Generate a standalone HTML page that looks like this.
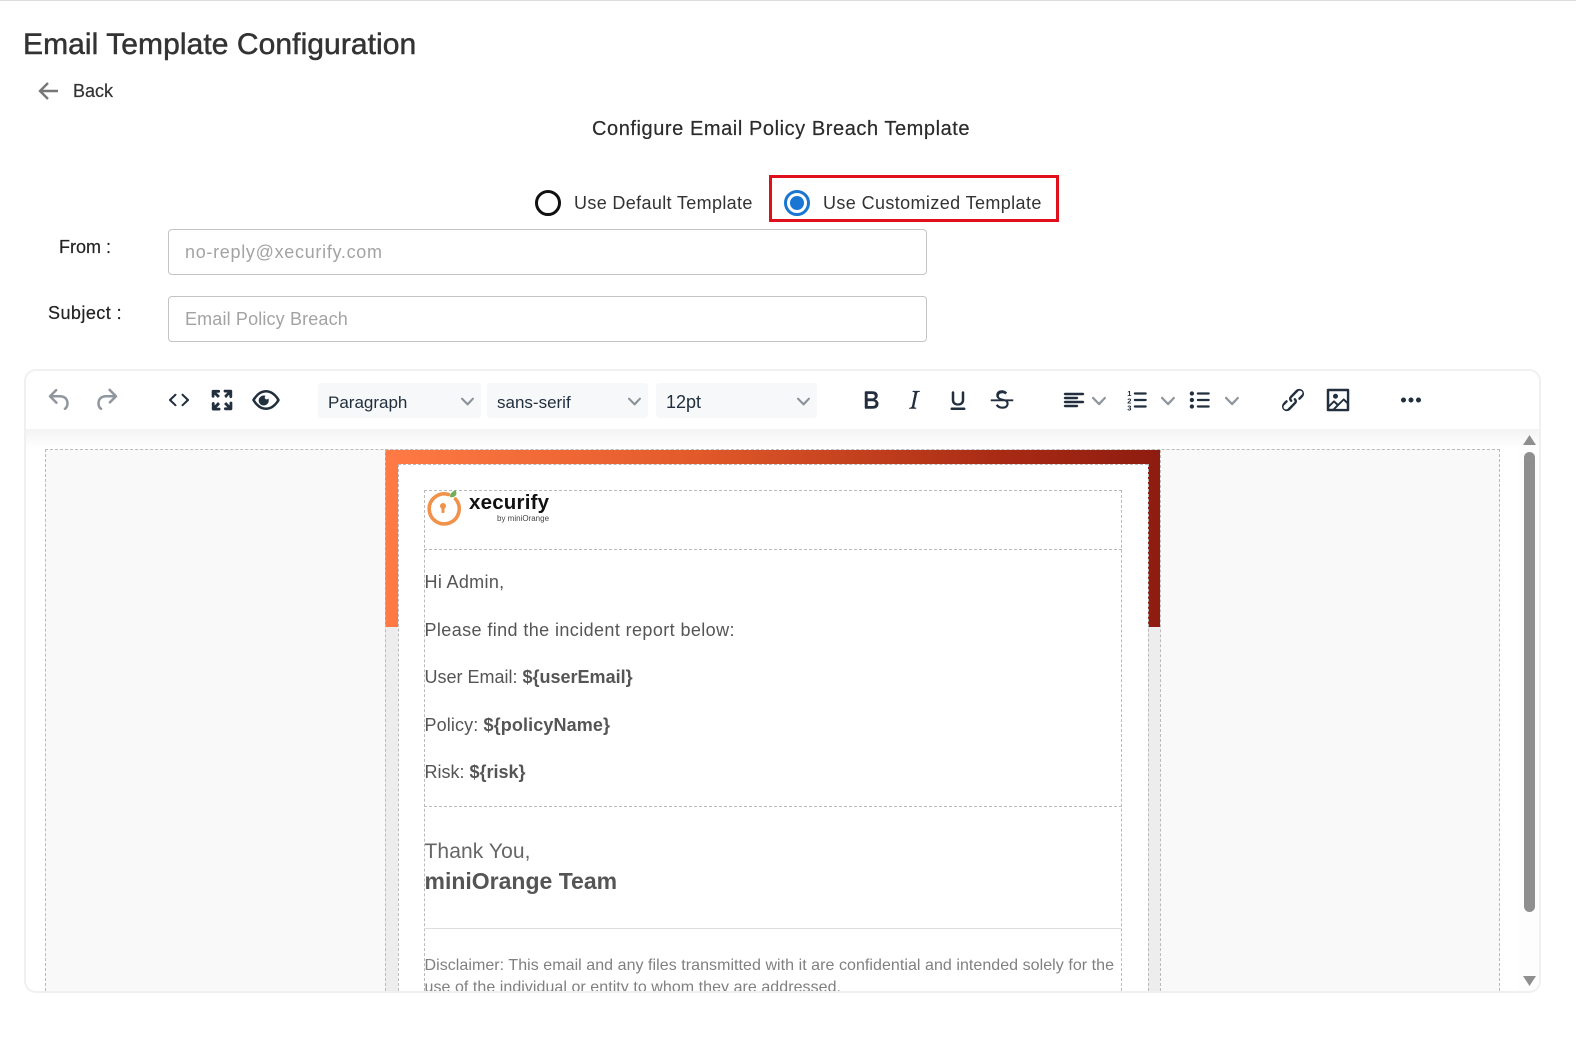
<!DOCTYPE html>
<html><head><meta charset="utf-8"><style>
*{box-sizing:border-box}
html,body{margin:0;padding:0;background:#fff;width:1576px;height:1040px;overflow:hidden}
body{position:relative;font-family:"Liberation Sans",sans-serif}
.t{position:absolute;white-space:nowrap;line-height:1}
.a{position:absolute}
svg.i{position:absolute;width:30px;height:30px;fill:#222f3e}
svg.c{position:absolute;width:10px;height:10px;fill:#222f3e;opacity:.5}
.sel{position:absolute;top:383px;height:35px;background:#f7f8f9;border-radius:3px;color:#222f3e;font-size:17px;line-height:39px;padding-left:10px}
.inp{position:absolute;left:168px;width:759px;height:46px;border:1px solid #c4c4c4;border-radius:4px;color:#a3a3a3;font-size:18px;line-height:45px;padding-left:16px}
.m{color:#555;font-size:18px;left:424.5px}
.dh{position:absolute;border-top:1px dashed #bbb;height:0}
.dv{position:absolute;border-left:1px dashed #bbb;width:0}
</style></head><body>
<div class="a" style="left:0;top:0;width:1576px;height:1px;background:#ddd"></div>
<div class="t" style="left:23px;top:30px;font-size:30px;color:#333;-webkit-text-stroke:.5px #333;letter-spacing:.07px">Email Template Configuration</div>
<svg class="a" style="left:36px;top:80px" width="24" height="22" viewBox="0 0 24 22" fill="none" stroke="#777" stroke-width="2.4"><path d="M22 11H4M12 3l-8 8 8 8"/></svg>
<div class="t" style="left:73px;top:82px;font-size:18px;color:#333;-webkit-text-stroke:.2px #333">Back</div>
<div class="t" style="left:592px;top:119px;font-size:20px;color:#2b2b2b;letter-spacing:.57px;-webkit-text-stroke:.2px #2b2b2b">Configure Email Policy Breach Template</div>

<div class="a" style="left:535px;top:190px;width:26px;height:26px;border:3px solid #111;border-radius:50%"></div>
<div class="t" style="left:574px;top:194px;font-size:18px;color:#333;letter-spacing:.35px">Use Default Template</div>
<div class="a" style="left:769px;top:175px;width:290px;height:47px;border:3px solid #e00f1c"></div>
<div class="a" style="left:784px;top:190px;width:26px;height:26px;border:3px solid #1976d2;border-radius:50%"></div>
<div class="a" style="left:790px;top:196px;width:14px;height:14px;background:#1976d2;border-radius:50%"></div>
<div class="t" style="left:823px;top:194px;font-size:18px;color:#333;letter-spacing:.39px">Use Customized Template</div>

<div class="t" style="left:59px;top:238px;font-size:18px;color:#222;-webkit-text-stroke:.2px #222">From :</div>
<div class="t" style="left:48px;top:304px;font-size:18px;color:#222;letter-spacing:.45px;-webkit-text-stroke:.2px #222">Subject :</div>
<div class="inp" style="top:229px;letter-spacing:.7px">no-reply@xecurify.com</div>
<div class="inp" style="top:296px;letter-spacing:.15px">Email Policy Breach</div>

<!-- card -->
<div class="a" style="left:24px;top:369px;width:1517px;height:624px;border:2px solid #f0f0f0;border-radius:12px;overflow:hidden;background:#fff">
 <div class="a" style="left:-2px;top:0;width:1517px;height:620px;">
  <div class="a" style="left:1495px;top:60px;width:24px;height:560px;background:#fdfdfd"></div>
 </div>
</div>
<div class="a" style="left:26px;top:429px;width:1513px;height:20px;background:linear-gradient(#f3f3f3,#fff)"></div>
<div class="a" style="left:45px;top:449px;width:1455px;height:542px;background:#f9f9f9;border:1px dashed #bbb;border-bottom:0"></div>
<div class="a" style="left:385px;top:450px;width:775px;height:541px;background:#ededed"></div>
<div class="a" style="left:385px;top:450px;width:775px;height:177px;background:linear-gradient(90deg,#ff7a45,#e25a2a 40%,#a82a14 80%,#8e1c10)"></div>
<div class="a" style="left:398px;top:464px;width:750px;height:527px;background:#fff"></div>
<div class="dv" style="left:385px;top:450px;height:541px"></div>
<div class="dv" style="left:1160px;top:450px;height:541px"></div>
<div class="dv" style="left:398px;top:464px;height:527px"></div>
<div class="dv" style="left:1148px;top:464px;height:527px"></div>
<div class="dh" style="left:398px;top:464px;width:750px"></div>
<div class="dh" style="left:385px;top:449px;width:775px"></div>
<div class="dv" style="left:424px;top:490px;height:501px"></div>
<div class="dv" style="left:1121px;top:490px;height:501px"></div>
<div class="dh" style="left:424px;top:490px;width:698px"></div>
<div class="dh" style="left:424px;top:549px;width:698px"></div>
<div class="dh" style="left:424px;top:806px;width:698px"></div>
<div class="a" style="left:424px;top:928px;width:698px;height:1px;background:#ddd"></div>

<!-- logo -->
<svg class="a" style="left:424px;top:488px" width="40" height="40" viewBox="0 0 40 40">
 <path d="M26 5.500A15 15 0 1 0 33 10" fill="none" stroke="#f0924a" stroke-width="3.6" stroke-linecap="round" transform="translate(-1.500 1)" />
 <circle cx="19" cy="18" r="3" fill="#f0924a"/><rect x="17.500" y="18" width="3" height="7" rx="1" fill="#f0924a"/>
 <path d="M26 9c0-4 3-6 6-7 0 1 0 2 .5 3 0 3-3 5-6.500 4z" fill="#6fae5a"/>
</svg>
<div class="t" style="left:469px;top:493px;font-size:20.500px;font-weight:bold;color:#111;letter-spacing:.2px">xecurify</div>
<div class="t" style="left:497px;top:515px;font-size:8px;color:#444">by miniOrange</div>

<!-- email text -->
<div class="t m" style="top:573px;letter-spacing:.33px">Hi Admin,</div>
<div class="t m" style="top:621px;letter-spacing:.4px">Please find the incident report below:</div>
<div class="t m" style="top:668px">User Email: <b>${userEmail}</b></div>
<div class="t m" style="top:716px;letter-spacing:.12px">Policy: <b>${policyName}</b></div>
<div class="t m" style="top:763px">Risk: <b>${risk}</b></div>
<div class="t" style="left:424.5px;top:841px;font-size:21px;color:#666;letter-spacing:.1px">Thank You,</div>
<div class="t" style="left:424.5px;top:870px;font-size:23px;font-weight:bold;color:#555">miniOrange Team</div>
<div class="a" style="left:424.5px;top:955px;width:697px;height:36px;overflow:hidden;color:#808080;font-size:16px;letter-spacing:.05px;line-height:22px;white-space:nowrap">Disclaimer: This email and any files transmitted with it are confidential and intended solely for the<br>use of the individual or entity to whom they are addressed.</div>

<!-- scrollbar -->
<div class="a" style="left:1524px;top:452px;width:11px;height:460px;background:#8f8f8f;border-radius:6px"></div>
<svg class="a" style="left:1523px;top:435px" width="13" height="10"><path d="M6.500 0L13 10H0z" fill="#8f8f8f"/></svg>
<svg class="a" style="left:1523px;top:976px" width="13" height="10"><path d="M0 0h13L6.500 10z" fill="#8f8f8f"/></svg>

<!-- toolbar -->
<svg class="i" style="left:45px;top:385px;opacity:.5" viewBox="0 0 24 24"><path d="M6.400 8H12c3.700 0 6.200 2 6.800 5.100.6 2.700-.4 5.600-2.300 6.800a1 1 0 0 1-1-1.800c1.100-.6 1.800-2.700 1.400-4.600-.5-2.100-2.100-3.500-4.900-3.500H6.400l3.300 3.300a1 1 0 1 1-1.400 1.400l-5-5a1 1 0 0 1 0-1.400l5-5a1 1 0 0 1 1.400 1.400L6.400 8z"/></svg>
<svg class="i" style="left:91px;top:385px;opacity:.5" viewBox="0 0 24 24"><path d="M17.600 10H12c-2.800 0-4.400 1.400-4.900 3.500-.4 2 .3 4 1.400 4.600a1 1 0 1 1-1 1.800c-2-1.200-2.900-4.100-2.300-6.800.6-3 3-5.100 6.800-5.100h5.600l-3.300-3.300a1 1 0 1 1 1.400-1.400l5 5a1 1 0 0 1 0 1.400l-5 5a1 1 0 0 1-1.400-1.400l3.300-3.300z"/></svg>
<svg class="i" style="left:164px;top:385px" viewBox="0 0 24 24"><path d="M9.800 15.700c.3.300.3.800 0 1-.3.400-.9.400-1.200 0l-4.400-4.100a.8.800 0 0 1 0-1.200l4.400-4.200c.3-.3.900-.3 1.200 0 .3.300.3.800 0 1.100L6 12l3.800 3.700zM14.200 15.700c-.3.300-.3.800 0 1 .4.400.9.400 1.200 0l4.400-4.100c.3-.3.300-.9 0-1.200l-4.400-4.200a.8.800 0 0 0-1.200 0c-.3.300-.3.800 0 1.100L18 12l-3.800 3.700z"/></svg>
<svg class="i" style="left:207px;top:385px;stroke:#222f3e;stroke-width:.5" viewBox="0 0 24 24"><path d="M15.300 10l-1.200-1.300 2.900-3h-2.300a.9.900 0 1 1 0-1.700H19c.5 0 .9.400.9.900v4.400a.9.900 0 1 1-1.800 0V7l-2.900 3zm0 4l3 3v-2.300a.9.900 0 1 1 1.700 0V19c0 .5-.4.900-.9.900h-4.400a.9.900 0 1 1 0-1.800H17l-3-2.900 1.300-1.200zM10 15.400l-2.900 3h2.300a.9.900 0 1 1 0 1.700H5a.9.900 0 0 1-.9-.9v-4.400a.9.900 0 1 1 1.800 0V17l2.900-3 1.200 1.300zM8.700 10L5.700 7v2.300a.9.900 0 0 1-1.700 0V5c0-.5.400-.9.900-.9h4.400a.9.900 0 0 1 0 1.800H7l3 2.900-1.300 1.200z"/></svg>
<svg class="i" style="left:251px;top:385px" viewBox="0 0 24 24"><path d="M3.500 12.500c.5.800 1.100 1.600 1.800 2.300 2 2 4.200 3.200 6.700 3.200s4.700-1.200 6.700-3.200a16.200 16.200 0 0 0 2.100-2.800 15.700 15.700 0 0 0-2.100-2.800c-2-2-4.200-3.200-6.700-3.200a9.300 9.300 0 0 0-6.700 3.200A16.200 16.200 0 0 0 3.200 12c0 .2.200.3.300.5zm-2.400-1l.7-1.200L4 7.800C6.200 5.400 8.900 4 12 4c3 0 5.800 1.400 8.100 3.800a18.200 18.200 0 0 1 2.800 3.700v1l-.7 1.200-2.100 2.500c-2.300 2.400-5 3.800-8.100 3.800a11 11 0 0 1-8.100-3.800 18.200 18.200 0 0 1-2.800-3.700 1 1 0 0 1 0-1zm12.700-.8a1.500 1.500 0 1 1-2.100-2 4 4 0 1 0 2.100 2z"/></svg>

<div class="sel" style="left:318px;width:163px">Paragraph</div>
<div class="sel" style="left:487px;width:161px">sans-serif</div>
<div class="sel" style="left:656px;width:161px;font-size:18px">12pt</div>
<svg class="c" style="left:461px;top:395px;width:13px;height:13px" viewBox="0 0 10 10"><path d="M8.700 2.200c.3-.3.800-.3 1 0 .4.400.4.900 0 1.200L5.700 7.800c-.3.300-.9.300-1.200 0L.2 3.400a.8.800 0 0 1 0-1.200c.3-.3.800-.3 1.100 0L5 6l3.700-3.800z"/></svg>
<svg class="c" style="left:628px;top:395px;width:13px;height:13px" viewBox="0 0 10 10"><path d="M8.700 2.200c.3-.3.800-.3 1 0 .4.400.4.900 0 1.200L5.700 7.800c-.3.300-.9.300-1.200 0L.2 3.400a.8.800 0 0 1 0-1.200c.3-.3.800-.3 1.100 0L5 6l3.700-3.800z"/></svg>
<svg class="c" style="left:797px;top:395px;width:13px;height:13px" viewBox="0 0 10 10"><path d="M8.700 2.200c.3-.3.800-.3 1 0 .4.400.4.900 0 1.200L5.700 7.800c-.3.300-.9.300-1.200 0L.2 3.400a.8.800 0 0 1 0-1.200c.3-.3.800-.3 1.100 0L5 6l3.700-3.800z"/></svg>

<svg class="i" style="left:856px;top:385px" viewBox="0 0 24 24"><path d="M7.800 19c-.3 0-.5 0-.6-.2l-.2-.5V5.700c0-.2 0-.4.200-.5l.6-.2h5c1.500 0 2.700.3 3.500 1 .7.600 1.100 1.400 1.100 2.500a3 3 0 0 1-.6 1.900c-.4.600-1 1-1.600 1.200.4.100.9.300 1.300.6s.8.700 1 1.200c.4.400.5 1 .5 1.600 0 1.300-.4 2.300-1.300 3-.8.700-2.100 1-3.800 1H7.800zm5-8.300c.6 0 1.200-.1 1.600-.5.400-.3.600-.7.600-1.300 0-1.100-.8-1.700-2.300-1.700H9.300v3.500h3.400zm.5 6c.7 0 1.300-.1 1.700-.4.400-.4.600-.9.600-1.500s-.2-1-.7-1.400c-.4-.3-1-.4-2-.4H9.400v3.800h4z"/></svg>
<svg class="i" style="left:899px;top:385px" viewBox="0 0 24 24"><path d="M16.700 4.700l-.1.900h-.3c-.6 0-1 0-1.400.3-.3.300-.4.600-.5 1.100l-2.100 9.800v.6c0 .5.400.8 1.400.8h.2l-.2.800H8l.2-.8h.2c1.100 0 1.800-.5 2-1.500l2-9.800.1-.5c0-.6-.4-.8-1.400-.8h-.3l.2-.9h5.800z"/></svg>
<svg class="i" style="left:943px;top:385px" viewBox="0 0 24 24"><path d="M16 5c.6 0 1 .4 1 1v6c0 2.800-2 4.500-5 4.500S7 14.800 7 12V6c0-.6.400-1 1-1s1 .4 1 1v6c0 1.700 1.300 2.700 3 2.700s3-1 3-2.700V6c0-.6.400-1 1-1zM7 18h10c.6 0 1 .4 1 1s-.4 1-1 1H7a1 1 0 1 1 0-2z"/></svg>
<svg class="i" style="left:987px;top:385px" viewBox="0 0 24 24"><path d="M15.600 8.500c-.5-.7-1-1.100-1.300-1.300-.6-.4-1.300-.6-2-.6-2.700 0-2.800 1.700-2.800 2.100 0 1.600 1.800 2 3.200 2.300 4.400.9 4.600 2.800 4.600 3.900 0 1.400-.7 4.100-5 4.100A6.200 6.200 0 0 1 7 16.400l1.500-1.100c.4.600 1.600 2 3.700 2 1.600 0 2.500-.4 3-1 .3-.4.400-.9.400-1.300 0-.4-.1-.9-.4-1.300-.7-.9-2.200-1.200-3.200-1.400-1.600-.4-4.600-1.100-4.600-4.200 0-2.600 2-3.900 4.500-3.900 2.100 0 3.500 1 4.200 2l-1.500 1.300zM3 11.500h18V13H3z"/></svg>

<svg class="i" style="left:1062px;top:388px;width:24px;height:24px;stroke:#222f3e;stroke-width:.5" viewBox="0 0 24 24"><path d="M3 5h18c.6 0 1 .4 1 1s-.4 1-1 1H3a1 1 0 1 1 0-2zm0 4h12c.6 0 1 .4 1 1s-.4 1-1 1H3a1 1 0 1 1 0-2zm0 8h12c.6 0 1 .4 1 1s-.4 1-1 1H3a1 1 0 0 1 0-2zm0-4h18c.6 0 1 .4 1 1s-.4 1-1 1H3a1 1 0 0 1 0-2z"/></svg>
<svg class="c" style="left:1092px;top:394px;width:14px;height:14px" viewBox="0 0 10 10"><path d="M8.700 2.200c.3-.3.800-.3 1 0 .4.400.4.900 0 1.200L5.700 7.800c-.3.300-.9.300-1.200 0L.2 3.400a.8.800 0 0 1 0-1.200c.3-.3.800-.3 1.100 0L5 6l3.700-3.800z"/></svg>
<svg class="i" style="left:1124px;top:387px;width:26px;height:26px" viewBox="0 0 24 24"><path d="M10 5h10c.6 0 1 .4 1 1s-.4 1-1 1H10a1 1 0 0 1 0-2zm0 6h10c.6 0 1 .4 1 1s-.4 1-1 1H10a1 1 0 0 1 0-2zm0 6h10c.6 0 1 .4 1 1s-.4 1-1 1H10a1 1 0 0 1 0-2z"/><text x="3" y="8.500" font-size="7" font-weight="bold" font-family="Liberation Sans">1</text><text x="3" y="15" font-size="7" font-weight="bold" font-family="Liberation Sans">2</text><text x="3" y="21.500" font-size="7" font-weight="bold" font-family="Liberation Sans">3</text></svg>
<svg class="c" style="left:1161px;top:394px;width:14px;height:14px" viewBox="0 0 10 10"><path d="M8.700 2.200c.3-.3.800-.3 1 0 .4.400.4.900 0 1.200L5.700 7.800c-.3.300-.9.300-1.200 0L.2 3.400a.8.800 0 0 1 0-1.200c.3-.3.800-.3 1.100 0L5 6l3.700-3.800z"/></svg>
<svg class="i" style="left:1187px;top:387px;width:26px;height:26px" viewBox="0 0 24 24"><path d="M10 5h10c.6 0 1 .4 1 1s-.4 1-1 1H10a1 1 0 0 1 0-2zm0 6h10c.6 0 1 .4 1 1s-.4 1-1 1H10a1 1 0 0 1 0-2zm0 6h10c.6 0 1 .4 1 1s-.4 1-1 1H10a1 1 0 0 1 0-2z"/><circle cx="4.500" cy="6" r="2"/><circle cx="4.500" cy="12" r="2"/><circle cx="4.500" cy="18" r="2"/></svg>
<svg class="c" style="left:1225px;top:394px;width:14px;height:14px" viewBox="0 0 10 10"><path d="M8.700 2.200c.3-.3.800-.3 1 0 .4.400.4.900 0 1.200L5.700 7.800c-.3.300-.9.300-1.200 0L.2 3.400a.8.800 0 0 1 0-1.200c.3-.3.800-.3 1.100 0L5 6l3.700-3.800z"/></svg>
<svg class="i" style="left:1278px;top:385px" viewBox="0 0 24 24"><path d="M6.200 12.300a1 1 0 0 1 1.400 1.400l-2.100 2.100a2 2 0 1 0 2.700 2.700l4.800-4.800a1 1 0 0 0 0-1.400 1 1 0 1 1 1.400-1.300 2.900 2.900 0 0 1 0 4L9.600 20a3.900 3.900 0 0 1-5.500-5.500l2-2zm11.600-.6a1 1 0 0 1-1.400-1.400l2-2a2 2 0 1 0-2.600-2.800L11 10.300a1 1 0 0 0 0 1.400A1 1 0 1 1 9.600 13a2.900 2.900 0 0 1 0-4L14.400 4a3.900 3.900 0 0 1 5.500 5.500l-2 2z"/></svg>
<svg class="i" style="left:1323px;top:385px" viewBox="0 0 24 24"><path fill-rule="evenodd" d="M5 15.700l3.300-3.200c.3-.3.700-.3 1 0L12 15l4.100-4c.3-.4.800-.4 1 0l2 1.900V5H5v10.700zM5 18V19h3l2.800-2.900-2-2L5 17.900zm14-3l-2.500-2.400-6.400 6.500H19v-4zM4 3h16c.6 0 1 .4 1 1v16c0 .6-.4 1-1 1H4a1 1 0 0 1-1-1V4c0-.6.400-1 1-1zm6 8a2 2 0 1 0 0-4 2 2 0 0 0 0 4z"/></svg>
<svg class="i" style="left:1396px;top:385px" viewBox="0 0 24 24"><path d="M6 10a2 2 0 0 0-2 2c0 1.100.9 2 2 2a2 2 0 0 0 2-2 2 2 0 0 0-2-2zm12 0a2 2 0 0 0-2 2c0 1.100.9 2 2 2a2 2 0 0 0 2-2 2 2 0 0 0-2-2zm-6 0a2 2 0 0 0-2 2c0 1.100.9 2 2 2a2 2 0 0 0 2-2 2 2 0 0 0-2-2z"/></svg>
</body></html>
